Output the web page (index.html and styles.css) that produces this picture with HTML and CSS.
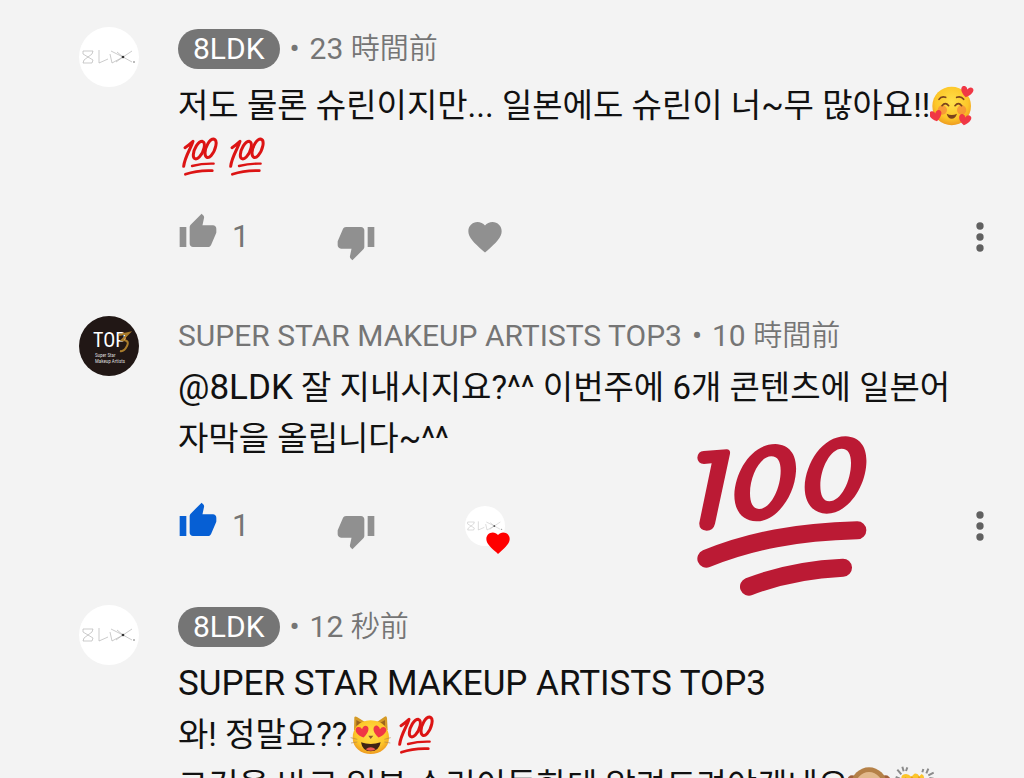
FILE: index.html
```html
<!DOCTYPE html>
<html lang="ja">
<head>
    <meta charset="UTF-8">
    <meta name="viewport" content="width=device-width, initial-scale=1.0">
    <title>コメント</title>
    <link rel="stylesheet" href="styles.css">
</head>
<body>

    <!-- shared icons -->
    <svg class="defs" aria-hidden="true">
        <symbol id="thumb-up" viewBox="0 0 24 24">
            <path d="M1 21h4V9H1v12zm22-11c0-1.1-.9-2-2-2h-6.31l.95-4.57.03-.32c0-.41-.17-.79-.44-1.06L14.17 1 7.59 7.59C7.22 7.95 7 8.45 7 9v10c0 1.1.9 2 2 2h9c.83 0 1.54-.5 1.84-1.22l3.02-7.05c.09-.23.14-.47.14-.73v-2z"/>
        </symbol>
        <symbol id="thumb-down" viewBox="0 0 24 24">
            <path d="M15 3H6c-.83 0-1.54.5-1.84 1.22l-3.02 7.05c-.09.23-.14.47-.14.73v2c0 1.1.9 2 2 2h6.31l-.95 4.57-.03.32c0 .41.17.79.44 1.06L9.83 23l6.59-6.59c.36-.36.58-.86.58-1.41V5c0-1.1-.9-2-2-2zm4 0v12h4V3h-4z"/>
        </symbol>
        <symbol id="heart" viewBox="0 0 24 24">
            <path d="M12 21.35l-1.45-1.32C5.4 15.36 2 12.28 2 8.5 2 5.42 4.42 3 7.5 3c1.74 0 3.41.81 4.5 2.09C13.09 3.81 14.76 3 16.5 3 19.58 3 22 5.42 22 8.5c0 3.78-3.4 6.86-8.55 11.54L12 21.35z"/>
        </symbol>
        <symbol id="more" viewBox="0 0 24 24">
            <circle cx="12" cy="6" r="2"/><circle cx="12" cy="12" r="2"/><circle cx="12" cy="18" r="2"/>
        </symbol>
        <symbol id="logo-8ldk" viewBox="0 0 60 60">
            <circle cx="30" cy="30" r="30" fill="#fff"/>
            <g fill="none" stroke="#b5b5b5" stroke-width=".7">
                <path d="M4 24H14L13 27 9 30 14 33 13 36H4L5 33 9 30 4 27Z"/>
                <path d="M20 23V36L29 32M31 27L33 36 44 30 32 24"/>
                <path d="M38 25L44 30 53 24M37 35L44 30 53 35"/>
            </g>
            <circle cx="44" cy="30" r="1.3" fill="#333"/>
            <circle cx="55" cy="35" r=".8" fill="#666"/>
        </symbol>

        <!-- emoji -->
        <symbol id="e-hundred" viewBox="0 0 141 120">
            <g fill="none" stroke="#dc1414" stroke-linecap="round" stroke-linejoin="round" stroke-width="9">
                <path d="M21 32Q32 25 45 13C39 34 21 57 17 88"/>
                <path d="M73 13C60 13 47 36 46 53C45 66 54 70 64 60C78 46 85 17 73 13Z"/>
                <path d="M107 6C94 6 82 30 81 47C81 62 90 66 99 56C113 41 121 9 107 6Z"/>
                <path d="M42 87Q73 79 107 80" stroke-width="7"/>
                <path d="M22 112Q58 99 103 101" stroke-width="8"/>
            </g>
        </symbol>
        <symbol id="e-love" viewBox="0 0 141 120">
            <defs>
                <radialGradient id="skin" cx=".5" cy=".4" r=".6">
                    <stop offset="0" stop-color="#ffe04a"/><stop offset=".7" stop-color="#fdc729"/><stop offset="1" stop-color="#ee9b20"/>
                </radialGradient>
                <path id="small-heart" d="M0 14C-28-3-18-22-8-18Q-2-17 0-10Q4-19 12-18C25-14 17 4 0 14Z"/>
            </defs>
            <circle cx="65" cy="60" r="58" fill="url(#skin)"/>
            <circle cx="37" cy="72" r="14" fill="#f47a3c" opacity=".6"/><circle cx="95" cy="72" r="14" fill="#f47a3c" opacity=".6"/>
            <g fill="none" stroke="#7b431d" stroke-width="5" stroke-linecap="round">
                <path d="M27 40Q34 29 47 34M80 34Q93 29 101 40M36 59Q46 47 56 59M75 59Q85 47 95 59"/>
            </g>
            <path d="M50 83Q65 91 81 83Q76 98 65 98T50 83Z" fill="#7b431d"/>
            <g fill="#f03745">
                <use href="#small-heart" transform="translate(110 20) rotate(12)"/>
                <use href="#small-heart" transform="translate(18 92) rotate(-12)"/>
                <use href="#small-heart" transform="translate(104 104) rotate(10)"/>
            </g>
        </symbol>
        <symbol id="e-cat" viewBox="0 0 141 120">
            <path d="M21 45L22 7Q24 2 30 6L53 20H91L113 5Q119 2 120 9L122 45Z" fill="#d59a26"/>
            <path d="M28 33V15L44 24ZM114 33V15L99 24Z" fill="#9b641d"/>
            <path d="M71 16C108 16 126 42 126 68C126 99 98 117 71 117S17 99 17 68C17 42 35 16 71 16Z" fill="url(#skin)"/>
            <g fill="#f03745">
                <use href="#small-heart" transform="translate(47 53) rotate(-10) scale(1.05)"/>
                <use href="#small-heart" transform="translate(97 53) rotate(10) scale(1.05)"/>
            </g>
            <path d="M64 62H79L71 72Z" fill="#8a5830"/>
            <path d="M42 82Q71 92 101 82Q96 109 71 109T42 82Z" fill="#3f2415"/>
            <path d="M56 103Q71 91 86 103Q71 112 56 103Z" fill="#ee5a52"/>
            <path d="M11 68L31 73M12 84L31 81M131 68L112 73M130 84L112 81" stroke="#b78a4a" stroke-width="2"/>
        </symbol>
        <symbol id="e-monkey" viewBox="0 0 141 120">
            <circle cx="12" cy="42" r="14" fill="#a0603a"/><circle cx="113" cy="42" r="14" fill="#a0603a"/>
            <circle cx="63" cy="58" r="54" fill="#b58148"/>
            <ellipse cx="63" cy="66" rx="43" ry="48" fill="#e2b98c"/>
            <circle cx="45" cy="56" r="6" fill="#3f2415"/><circle cx="81" cy="56" r="6" fill="#3f2415"/>
        </symbol>
        <symbol id="e-clap" viewBox="0 0 141 120">
            <path d="M22 46Q14 29 28 25Q38 21 49 32L58 23Q68 20 73 31L80 24Q89 28 87 38L102 60 110 110H35Z" fill="#fcc52c"/>
            <path d="M30 35L60 62M48 32L76 58M70 32L91 56" fill="none" stroke="#e49a1b" stroke-width="4"/>
            <path d="M2 33L15 38M7 11L19 25M22 2L26 16M37 4L33 15M85 9L82 19M100 8L94 22M116 20L100 28M116 38L103 36" stroke="#8b8b8b" stroke-width="6"/>
        </symbol>
    </svg>

    <main class="thread">

        <article class="comment">
            <svg class="avatar" role="img" aria-label="8LDK"><use href="#logo-8ldk"/></svg>
            <div class="content">
                <header class="meta owner">
                    <a class="chip" href="#">8LDK</a>
                    <span class="dot">•</span>
                    <span class="time">23 <span class="cjk">時間前</span></span>
                </header>
                <p class="text" lang="ko">저도 물론 슈린이지만... 일본에도 슈린이 너~무 많아요!!<svg class="emoji" role="img" aria-label="🥰"><use href="#e-love"/></svg><br><svg class="emoji" role="img" aria-label="💯"><use href="#e-hundred"/></svg><svg class="emoji" role="img" aria-label="💯"><use href="#e-hundred"/></svg></p>
                <div class="actions">
                    <button class="like" aria-label="高評価"><svg class="icon"><use href="#thumb-up"/></svg><span>1</span></button>
                    <button class="dislike" aria-label="低評価"><svg class="icon"><use href="#thumb-down"/></svg></button>
                    <button class="love" aria-label="ハート"><svg class="icon"><use href="#heart"/></svg></button>
                    <button class="menu" aria-label="メニュー"><svg class="icon"><use href="#more"/></svg></button>
                </div>
            </div>
        </article>

        <article class="comment">
            <svg class="avatar" viewBox="0 0 60 60" role="img" aria-label="TOP3">
                <circle cx="30" cy="30" r="30" fill="#211715"/>
                <text class="top" x="14" y="31">TOP</text>
                <path d="M40 19L50 17 43 24Q51 24 48 30T41 35" fill="none" stroke="#a87c2c" stroke-width="2"/>
                <text class="top-sub" x="16" y="41">Super Star</text>
                <text class="top-sub" x="16" y="47">Makeup Artists</text>
            </svg>
            <div class="content">
                <header class="meta">
                    <a class="name" href="#">SUPER STAR MAKEUP ARTISTS TOP3</a>
                    <span class="dot">•</span>
                    <span class="time">10 <span class="cjk">時間前</span></span>
                </header>
                <p class="text" lang="ko"><span class="latin">@8LDK</span> 잘 지내시지요?^^ 이번주에 6개 콘텐츠에 일본어<br>자막을 올립니다~^^</p>
                <div class="actions">
                    <button class="like active" aria-label="高評価"><svg class="icon"><use href="#thumb-up"/></svg><span>1</span></button>
                    <button class="dislike" aria-label="低評価"><svg class="icon"><use href="#thumb-down"/></svg></button>
                    <button class="love loved" aria-label="ハート">
                        <svg class="mini-avatar"><use href="#logo-8ldk"/></svg>
                        <svg class="badge"><use href="#heart"/></svg>
                    </button>
                    <button class="menu" aria-label="メニュー"><svg class="icon"><use href="#more"/></svg></button>
                </div>
            </div>

            <!-- sticker on top of the comment -->
            <svg class="sticker" viewBox="50 46 510 480" role="img" aria-label="💯">
                <g fill="#bb1a34" fill-rule="evenodd">
                    <path d="M70 91L139 86Q151 87 149 99L104 309Q99 330 79 330Q55 328 57 306L94 128L71 130Q52 129 51 111Q53 92 70 91Z"/>
                    <path id="zero" d="M285 70C330 72 350 105 347 152C343 225 290 302 228 302C185 300 162 270 162 222C165 150 215 70 285 70ZM273 107C240 107 209 165 209 218C209 245 217 265 236 265C270 265 301 205 301 150C301 122 292 107 273 107Z"/>
                    <use href="#zero" x="211" y="-23"/>
                </g>
                <path d="M78 414C210 360 350 334 531 329M206 498C290 465 380 446 488 441" fill="none" stroke="#bb1a34" stroke-width="54" stroke-linecap="round"/>
            </svg>
        </article>

        <article class="comment">
            <svg class="avatar" role="img" aria-label="8LDK"><use href="#logo-8ldk"/></svg>
            <div class="content">
                <header class="meta owner">
                    <a class="chip" href="#">8LDK</a>
                    <span class="dot">•</span>
                    <span class="time">12 <span class="cjk">秒前</span></span>
                </header>
                <p class="text" lang="ko"><span class="latin">SUPER STAR MAKEUP ARTISTS TOP3</span><br>와! 정말요??<svg class="emoji" role="img" aria-label="😻"><use href="#e-cat"/></svg><svg class="emoji" role="img" aria-label="💯"><use href="#e-hundred"/></svg><br>그것을 바로 일본 슈린이들한테 알려드려야겠네요<svg class="emoji" role="img" aria-label="🙊"><use href="#e-monkey"/></svg><svg class="emoji" role="img" aria-label="👏"><use href="#e-clap"/></svg></p>
            </div>
        </article>

    </main>

</body>
</html>
```
FILE: styles.css
```css
* {
    box-sizing: border-box;
}
body {
    margin: 0;
    background: #f3f3f3;
    color: #111;
    font-family: Roboto, "Noto Sans CJK KR", sans-serif;
}
.defs {
    position: absolute;
    width: 0;
    height: 0;
}
.thread {
    height: 100vh;
    padding: 27px 22px 0 79px;
    overflow: hidden;
}
.comment {
    position: relative;
    display: flex;
    gap: 39px;
    min-height: 289px;
}
.avatar {
    flex: none;
    width: 60px;
    height: 60px;
}
.top {
    font-family: "Liberation Sans Narrow", "Roboto Condensed", sans-serif;
    font-size: 20px;
    fill: #fff;
}
.top-sub {
    font-family: "Liberation Sans Narrow", "Roboto Condensed", sans-serif;
    font-size: 5px;
    fill: #ddd;
}
.content {
    flex: 1;
    min-width: 0;
    display: flex;
    flex-direction: column;
}

/* name and time */
.meta {
    display: flex;
    align-items: center;
    height: 40px;
    margin-bottom: 6px;
    color: #757575;
    font-size: 30px;
    line-height: 40px;
    white-space: nowrap;
}
.meta.owner {
    margin: 2px 0 11px;
}
.meta a {
    color: inherit;
    text-decoration: none;
}
.meta .chip {
    padding: 0 15px;
    border-radius: 20px;
    background: #757575;
    color: #fff;
}
.dot {
    width: 30px;
    text-align: center;
    font-size: 30px;
}
.cjk {
    font-family: "Noto Sans CJK JP", sans-serif;
    font-size: 29px;
    font-weight: 350;
    line-height: 1;
}

.text {
    margin: 0;
    font-size: 33px;
    line-height: 51px;
    white-space: nowrap;
}
.latin {
    font-size: 35px;
}
.emoji {
    width: 47px;
    height: 40px;
    margin-bottom: 4px;
    vertical-align: middle;
}

/* buttons */
.actions {
    display: flex;
    height: 50px;
    margin-top: auto;
    margin-bottom: 54px;
}
button {
    display: flex;
    padding: 0;
    border: none;
    background: none;
    color: #909090;
    font-family: inherit;
    cursor: pointer;
}
.icon {
    width: 40px;
    height: 40px;
    fill: currentColor;
}
.like {
    width: 158px;
    gap: 14px;
    align-items: flex-start;
}
.like span {
    color: #757575;
    font-size: 31px;
    line-height: 50px;
}
.like.active {
    color: #065fd4;
}
.dislike {
    width: 129px;
    align-items: flex-end;
}
.love {
    align-items: center;
}
.loved {
    position: relative;
}
.mini-avatar {
    width: 40px;
    height: 40px;
}
.badge {
    position: absolute;
    left: 19px;
    top: 28px;
    width: 28px;
    height: 28px;
    fill: #f00;
}
.menu {
    margin-left: auto;
    align-items: center;
    color: #606060;
}
.menu .icon {
    width: 44px;
    height: 44px;
}

.sticker {
    position: absolute;
    top: 120px;
    right: 135px;
    width: 170px;
    height: 160px;
}
```
